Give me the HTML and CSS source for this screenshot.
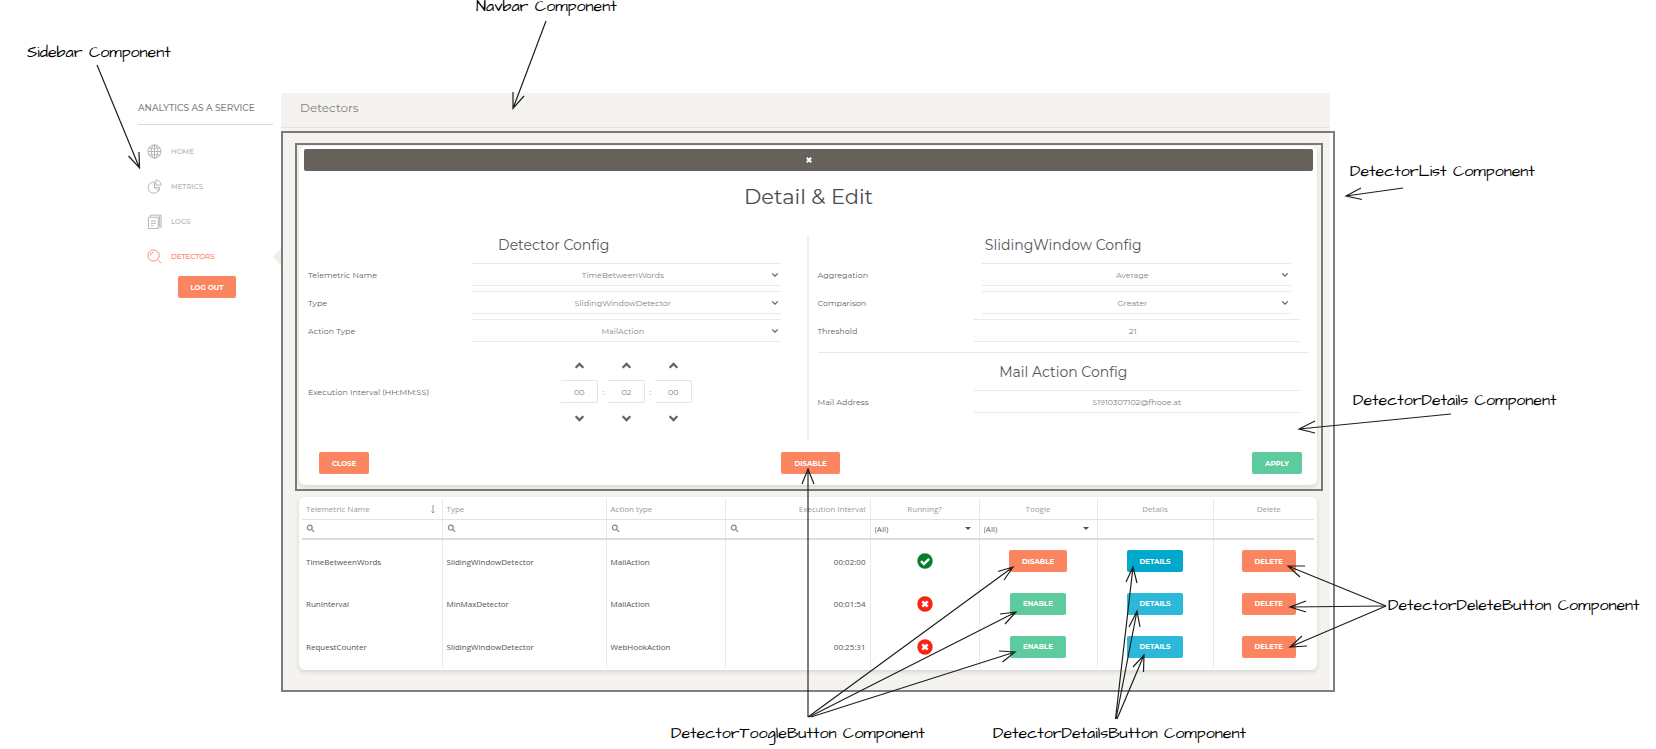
FILE: index.html
```html
<!DOCTYPE html>
<html lang="en">
<head>
<meta charset="utf-8">
<title>Detectors – Analytics as a Service</title>
<link rel="stylesheet" href="styles.css">
</head>
<body>
<svg class="defs" aria-hidden="true">
  <symbol id="chev-down" viewBox="0 0 10 10"><path d="M1.5 3 5 6.5 8.5 3"/></symbol>
  <symbol id="chev-up" viewBox="0 0 10 10"><path d="M1.5 7 5 3.500 8.500 7"/></symbol>
  <symbol id="search" viewBox="0 0 10 10"><circle cx="4.200" cy="4" r="2.700"/><path d="M6.200 6 9 8.800"/></symbol>
  <symbol id="no" viewBox="0 0 16 16"><circle cx="8" cy="8" r="7.700" fill="#f9210f"/><path d="M5.300 5.300l5.400 5.400M10.700 5.300l-5.400 5.400" stroke="#fff" stroke-width="2.600"/></symbol>
  <symbol id="yes" viewBox="0 0 16 16"><circle cx="8" cy="8" r="7.700" fill="#087e2b"/><path d="M4 8.200l2.900 2.800 5.200-5.200" fill="none" stroke="#fff" stroke-width="2.400"/></symbol>
</svg>
<div class="app">
  <aside class="sidebar">
    <div class="brand">ANALYTICS AS A SERVICE</div>
    <nav class="menu">
      <a href="#home"><svg viewBox="0 0 16 16"><circle cx="8" cy="8" r="7"/><ellipse cx="8" cy="8" rx="3.500" ry="7"/><path d="M8 1v14M1 8h14M2 4.500h12M2 11.500h12"/></svg>HOME</a>
      <a href="#metrics"><svg viewBox="0 0 16 16"><path d="M8 3.200A6 6 0 1 0 13.200 9.500M8 3.200V9l4 3.800M9.500 1v5.500H15A5.500 5.500 0 0 0 9.500 1zM8 9h5.500a6 6 0 0 1-1.500 3.800"/></svg>METRICS</a>
      <a href="#logs"><svg viewBox="0 0 16 16"><path d="M1.500 3.500h10.500v12H1.500zM3.500 3V1.200h11.500V14H12.500M13.500 2v11M4 7.500h5.500M4 10h5.500M4 12.500h3"/></svg>LOGS</a>
      <a href="#detectors" class="active"><svg viewBox="0 0 16 16"><circle cx="7" cy="7" r="5.900"/><path d="M3.700 7A3.300 3.300 0 0 1 7 3.700M11.500 11.500l1 1M12.800 12.800l2.200 2.200"/></svg>DETECTORS</a>
    </nav>
    <button class="btn logout">LOG OUT</button>
  </aside>

  <main class="main">
    <header class="navbar">Detectors</header>
    <div class="content">
      <section class="card details">
        <button class="dismiss" aria-label="Close details"><svg viewBox="0 0 8 8"><path d="M1.800 1.800l4.400 4.400M6.200 1.800L1.800 6.200"/></svg></button>
        <h1>Detail &amp; Edit</h1>
        <form class="config">
          <div class="col left">
            <h2>Detector Config</h2>
            <div class="row"><label for="tn">Telemetric Name</label><div class="pick"><select id="tn"><option>TimeBetweenWords</option></select><svg><use href="#chev-down"/></svg></div></div>
            <div class="row"><label for="ty">Type</label><div class="pick"><select id="ty"><option>SlidingWindowDetector</option></select><svg><use href="#chev-down"/></svg></div></div>
            <div class="row"><label for="at">Action Type</label><div class="pick"><select id="at"><option>MailAction</option></select><svg><use href="#chev-down"/></svg></div></div>
            <div class="row interval"><label for="hh">Execution Interval (HH:MM:SS)</label>
              <div class="time">
                <div class="unit"><button type="button" aria-label="More hours"><svg><use href="#chev-up"/></svg></button><input id="hh" value="00"><button type="button" aria-label="Fewer hours"><svg><use href="#chev-down"/></svg></button></div>
                <span>:</span>
                <div class="unit"><button type="button" aria-label="More minutes"><svg><use href="#chev-up"/></svg></button><input aria-label="Minutes" value="02"><button type="button" aria-label="Fewer minutes"><svg><use href="#chev-down"/></svg></button></div>
                <span>:</span>
                <div class="unit"><button type="button" aria-label="More seconds"><svg><use href="#chev-up"/></svg></button><input aria-label="Seconds" value="00"><button type="button" aria-label="Fewer seconds"><svg><use href="#chev-down"/></svg></button></div>
              </div>
            </div>
          </div>
          <div class="col right">
            <h2>SlidingWindow Config</h2>
            <div class="row"><label for="ag">Aggregation</label><div class="pick"><select id="ag"><option>Average</option></select><svg><use href="#chev-down"/></svg></div></div>
            <div class="row"><label for="co">Comparison</label><div class="pick"><select id="co"><option>Greater</option></select><svg><use href="#chev-down"/></svg></div></div>
            <div class="row wide"><label for="th">Threshold</label><input id="th" value="21"></div>
            <hr>
            <h2>Mail Action Config</h2>
            <div class="row wide"><label for="ma">Mail Address</label><input id="ma" class="mail" value="S1910307102@fhooe.at"></div>
          </div>
        </form>
        <div class="actions">
          <button class="btn">CLOSE</button>
          <button class="btn">DISABLE</button>
          <button class="btn green">APPLY</button>
        </div>
      </section>

      <section class="card list">
        <table>
          <colgroup><col class="c1"><col class="c2"><col class="c3"><col class="c4"><col class="c5"><col class="c6"><col class="c7"><col class="c8"></colgroup>
          <thead>
            <tr><th><span class="sort">Telemetric Name<svg viewBox="0 0 6 10"><path d="M3 1v8M1.500 7.500 3 9l1.500-1.500"/></svg></span></th><th>Type</th><th>Action type</th><th class="num">Execution Interval</th><th class="mid">Running?</th><th class="mid">Toogle</th><th class="mid">Details</th><th class="mid">Delete</th></tr>
            <tr class="filters">
              <td><label class="find"><svg><use href="#search"/></svg><input aria-label="Filter telemetric name"></label></td>
              <td><label class="find"><svg><use href="#search"/></svg><input aria-label="Filter type"></label></td>
              <td><label class="find"><svg><use href="#search"/></svg><input aria-label="Filter action type"></label></td>
              <td><label class="find"><svg><use href="#search"/></svg><input aria-label="Filter interval"></label></td>
              <td><div class="all"><select aria-label="Filter running"><option>(All)</option></select></div></td>
              <td><div class="all"><select aria-label="Filter toogle"><option>(All)</option></select></div></td>
              <td></td><td></td>
            </tr>
          </thead>
          <tbody>
            <tr><td>TimeBetweenWords</td><td>SlidingWindowDetector</td><td>MailAction</td><td class="num">00:02:00</td><td class="mid"><svg class="state"><use href="#yes"/></svg></td><td class="mid"><button class="btn">DISABLE</button></td><td class="mid"><button class="btn blue hot">DETAILS</button></td><td class="mid"><button class="btn">DELETE</button></td></tr>
            <tr><td>RunInterval</td><td>MinMaxDetector</td><td>MailAction</td><td class="num">00:01:54</td><td class="mid"><svg class="state"><use href="#no"/></svg></td><td class="mid"><button class="btn green">ENABLE</button></td><td class="mid"><button class="btn blue">DETAILS</button></td><td class="mid"><button class="btn">DELETE</button></td></tr>
            <tr><td>RequestCounter</td><td>SlidingWindowDetector</td><td>WebHookAction</td><td class="num">00:25:31</td><td class="mid"><svg class="state"><use href="#no"/></svg></td><td class="mid"><button class="btn green">ENABLE</button></td><td class="mid"><button class="btn blue">DETAILS</button></td><td class="mid"><button class="btn">DELETE</button></td></tr>
          </tbody>
        </table>
      </section>
    </div>
  </main>
</div>

<svg class="notes" width="1656" height="749" aria-label="Component annotations">
  <g class="frames">
    <rect x="282" y="132" width="1052" height="559"/>
    <rect x="296" y="144" width="1026" height="346"/>
    <path d="M808 469V717"/>
  </g>
  <g class="arrows">
    <path d="M97 65 139.500 168M128.500 156l11 12-.5-16"/>
    <path d="M546 21 513 108.500M513 92v16.500l11-12.500"/>
    <path d="M1403 188 1346 196M1361 188l-15 8 16 3.500"/>
    <path d="M1451 414 1299 429M1315 421l-16 8 16 4"/>
    <path d="M1386 606 1288 566M1305 566h-17l12 11"/>
    <path d="M1386 606 1290 607M1306 601l-16 6 16 5"/>
    <path d="M1386 606 1290 647M1302 636l-12 11 17-1"/>
    <path d="M1115.500 719 1133 567M1126 582l7-15 4 16"/>
    <path d="M1116 719 1137 611M1129 627l8-16 3 16"/>
    <path d="M1117 719 1144 655M1133 667l11-12-.5 17"/>
    <path d="M802 484l6-15 6 15"/>
    <path d="M808 717 1013 567M998 571.500l15-4.500-9 13"/>
    <path d="M809 717 1016 612M1000 614l16-2-11 12"/>
    <path d="M811 717 1015 652M999 651l16 1-12.500 10"/>
  </g>
  <g class="captions">
    <text x="27" y="57">Sidebar Component</text>
    <text x="476" y="11">Navbar Component</text>
    <text x="1350" y="176">DetectorList Component</text>
    <text x="1353" y="405">DetectorDetails Component</text>
    <text x="1388" y="610">DetectorDeleteButton Component</text>
    <text x="671" y="738">DetectorToogleButton Component</text>
    <text x="993" y="738">DetectorDetailsButton Component</text>
  </g>
</svg>
</body>
</html>
```

FILE: styles.css
```css
* { box-sizing: border-box; }

body {
  margin: 0;
  position: relative;
  background: #fff;
  color: #5c5f62;
  font-family: Montserrat, Inter, "Open Sans", sans-serif;
  font-size: 8px;
  overflow: hidden;
}

button, input, select { font: inherit; color: inherit; margin: 0; padding: 0; border: 0; background: none; }
svg { fill: none; stroke: currentColor; }
.defs { position: absolute; width: 0; height: 0; }

.app { display: flex; padding: 93px 326px 57px 138px; }

/* Sidebar */
.sidebar { width: 143px; flex: none; }
.brand { height: 32px; line-height: 29px; margin-right: 8px; font-size: 9px; font-weight: 500; color: #85827e; border-bottom: 1px solid #dcdcdc; white-space: nowrap; }
.menu { padding-top: 9px; }
.menu a { position: relative; display: flex; align-items: center; gap: 9px; height: 35px; padding-left: 9px; color: #b4b2b0; text-decoration: none; font-size: 7px; font-weight: 500; }
.menu svg { width: 15px; height: 15px; }
.menu a.active { color: #fa845f; }
.menu a.active::after { content: ""; position: absolute; right: 0; top: 10px; border: 8px solid transparent; border-left: 0; border-right-color: #efeeea; }
.logout { display: block; margin: 2px 0 0 40px; width: 58px; }

.btn { height: 22px; padding: 0 13px; border-radius: 2px; background: #fb8560; color: #fff; font-size: 7px; font-weight: 700; }
.logout.btn { padding: 0; }
.green { background: #5dcb9d; }
.blue { background: #2cb9d9; }
.hot { background: #00a9cc; }

/* Main area */
.main { flex: 1; min-width: 0; background: #f4f3ef; }
.navbar { height: 35px; line-height: 30px; padding-left: 19px; font-size: 12px; color: #85827e; border-bottom: 1px solid #e6e4df; }
.content { padding: 18px 13px 20px 18px; }
.card { background: #fff; border-radius: 6px; box-shadow: 0 2px 4px rgba(60, 55, 45, .16); }

.details { padding: 3px 4px 11px 5px; }
.dismiss { display: flex; align-items: center; justify-content: center; width: 100%; height: 22px; border-radius: 2px; background: #66615b; color: #fff; }
.dismiss svg { width: 8px; height: 8px; stroke-width: 2; }
h1, h2 { margin: 0; font-weight: 400; text-align: center; }
h1 { margin: 12px 0 24px; font-size: 21px; line-height: 28px; color: #4a4c4e; }
h2 { font-size: 14px; line-height: 20px; color: #55585a; }

.config { display: grid; grid-template-columns: 1fr 1fr; min-height: 205px; }
.col { display: flex; flex-direction: column; gap: 5px; }
.left { padding: 0 7px 0 4px; border-right: 2px solid #f0f0f0; }
.right { padding: 0 4px 0 9px; }
.col h2 { margin-bottom: 3px; }
.row { display: grid; grid-template-columns: 164fr 309fr 18fr; align-items: center; }
.wide { grid-template-columns: 156fr 326fr 9fr; }
.row label { white-space: nowrap; line-height: 20px; }
.pick { position: relative; }
.pick select, .wide input { display: block; width: 100%; height: 23px; border: solid #e9e9e9; border-width: 1px 0; text-align: center; text-align-last: center; appearance: none; color: #85827e; }
.pick select, .wide input { padding-right: 8px; }
.wide .mail { padding-right: 0; }
.pick svg { position: absolute; right: 2px; top: 8px; width: 8px; height: 8px; stroke-width: 1.5; pointer-events: none; }
.col hr { width: 100%; margin: 5px 0 4px; border: 0; border-top: 1px solid #e9e9e9; }

.interval { margin-top: 11px; }
.time { display: flex; align-items: center; justify-content: center; gap: 3px; color: #85827e; }
.time span { width: 4px; text-align: center; }
.unit { display: flex; flex-direction: column; align-items: center; gap: 8px; }
.unit input { width: 37px; height: 23px; border: 1px solid #e4e4e4; border-left: 0; border-radius: 0 2px 2px 0; text-align: center; }
.unit button { display: flex; height: 14px; align-items: center; color: #66615b; }
.unit svg { width: 11px; height: 11px; stroke-width: 2; }

.actions { display: grid; grid-template-columns: 1fr auto 1fr; padding: 0 11px 0 15px; margin-top: 12px; }
.actions .btn:first-child { justify-self: start; }
.actions .btn:last-child { justify-self: end; }

/* Detector table */
.list { margin-top: 12px; padding: 2px 3px; font-family: "Segoe UI", "Open Sans", sans-serif; font-size: 8px; }
table { width: 100%; table-layout: fixed; border-collapse: collapse; }
.c1 { width: 140px; } .c2 { width: 164px; } .c3 { width: 119px; } .c4 { width: 145px; }
.c5 { width: 109px; } .c6 { width: 118px; } .c7 { width: 116px; } .c8 { width: 101px; }
th, td { padding: 0 4px; text-align: left; font-weight: 400; border-left: 1px solid #e9e9e9; white-space: nowrap; }
th:first-child, td:first-child { border-left: 0; }
th:last-child, td:last-child { padding-left: 14px; }
th { height: 20px; color: #9a9a9a; border-bottom: 1px solid #e2e2e2; }
.filters td { height: 20px; border-bottom: 2px solid #dcdcdc; }
tbody td { height: 43px; color: #505356; }
.num { text-align: right; }
.mid { text-align: center; }
td.mid { font-size: 0; }
.list .btn { font-family: Montserrat, Inter, sans-serif; }
.sort { display: flex; justify-content: space-between; align-items: center; padding-right: 2px; }
.sort svg { width: 6px; height: 10px; stroke-width: 1; }
.find { display: flex; align-items: center; color: #858585; }
.find svg { width: 9px; height: 9px; flex: none; stroke-width: 1.3; }
.find input { flex: 1; min-width: 0; height: 14px; }
.all { position: relative; }
.all select { display: block; width: 100%; appearance: none; }
.all::after { content: ""; position: absolute; right: 4px; top: 4px; border: 3px solid transparent; border-bottom: 0; border-top-color: #505356; pointer-events: none; }
.state { width: 16px; height: 16px; stroke: none; display: inline-block; vertical-align: middle; }

/* Annotation layer */
.notes { position: absolute; left: 0; top: 0; pointer-events: none; overflow: visible; }
.frames { stroke: #000; stroke-opacity: .5; stroke-width: 2; }
.arrows { stroke: #1e1e1e; stroke-width: 1.200; }
.captions { fill: #000; stroke: none; font-family: Virgil, "Architects Daughter", Kalam, "Patrick Hand", "Comic Neue", Lato, sans-serif; font-size: 16px; }
```
